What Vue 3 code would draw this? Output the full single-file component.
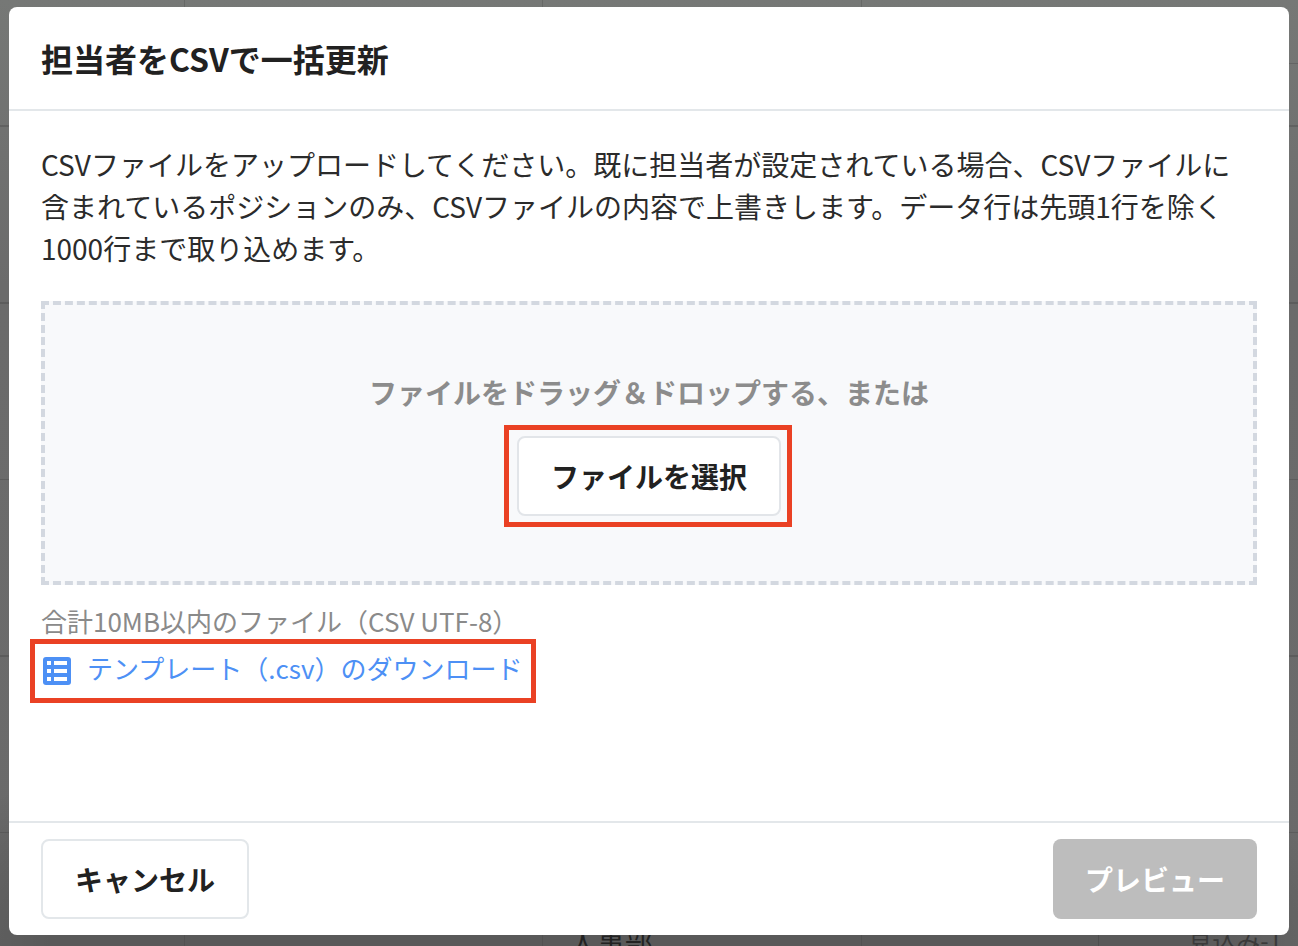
<script setup>
const columns = [
  { id: 'c1', rows: [] },
  { id: 'c2', rows: [] },
  { id: 'c3', rows: [{ text: '人事部', cls: 'dept' }] },
  { id: 'c4', rows: [{ text: '見込み-1', cls: 'status' }] },
]
</script>

<template>
  <div class="page">
    <div class="backdrop">
      <div v-for="col in columns" :key="col.id" class="col">
        <span v-for="r in col.rows" :key="r.text" :class="['cell', r.cls]">{{ r.text }}</span>
      </div>
    </div>
    <div class="tick"></div>
    <div class="tick-bottom"></div>
    <section class="modal">
      <header class="head"><h2>担当者をCSVで一括更新</h2></header>
      <div class="body">
        <p class="desc">CSVファイルをアップロードしてください。既に担当者が設定されている場合、CSVファイルに<br>含まれているポジションのみ、CSVファイルの内容で上書きします。データ行は先頭1行を除く<br>1000行まで取り込めます。</p>
        <div class="drop">
          <div class="drop-label">ファイルをドラッグ＆ドロップする、または</div>
          <div class="mark mark-btn"><button class="pick">ファイルを選択</button></div>
        </div>
        <div class="note">合計10MB以内のファイル（CSV UTF-8）</div>
        <div class="mark mark-link">
          <a class="tpl">
            <svg class="ico" viewBox="0 0 28 28" width="28" height="28">
              <rect width="28" height="28" rx="3" fill="#4d90f5" />
              <rect x="4" y="4" width="4" height="4" fill="#fff" />
              <rect x="11" y="4" width="13" height="4" fill="#fff" />
              <rect x="4" y="12" width="4" height="4" fill="#fff" />
              <rect x="11" y="12" width="13" height="4" fill="#fff" />
              <rect x="4" y="20" width="4" height="4" fill="#fff" />
              <rect x="11" y="20" width="13" height="4" fill="#fff" />
            </svg>
            <span class="tpl-text">テンプレート（.csv）のダウンロード</span>
          </a>
        </div>
      </div>
      <footer class="foot">
        <button class="btn cancel">キャンセル</button>
        <button class="btn preview" disabled>プレビュー</button>
      </footer>
    </section>
  </div>
</template>

<style>
html, body { margin: 0; background: #6c6c6c; }
</style>

<style scoped>
.page {
  position: relative;
  width: 1298px;
  height: 946px;
  overflow: hidden;
  font-family: "Noto Sans CJK JP", "Noto Sans", sans-serif;
  background:
    radial-gradient(ellipse 760px 260px at 620px 946px, rgba(0, 0, 0, 0.16) 75%, rgba(0, 0, 0, 0) 100%),
    linear-gradient(180deg, #767876 0%, #6b6b6b 30%, #6a6a6a 100%);
}
.backdrop {
  position: absolute;
  inset: 0;
  display: grid;
  grid-template-columns: 185px 358px 319px 436px;
  background: repeating-linear-gradient(180deg, transparent 0, transparent 174.5px, rgba(50, 50, 50, 0.25) 174.5px, rgba(50, 50, 50, 0.25) 176.5px) 0 -49px;
}
.col {
  position: relative;
  border-right: 1px solid rgba(60, 60, 60, 0.25);
}
.col:last-child { border-right: 0; }
.tick {
  position: absolute;
  left: 1289px;
  top: 63px;
  width: 9px;
  height: 1px;
  background: rgba(50, 50, 50, 0.25);
}
.tick-bottom {
  position: absolute;
  left: 1098px;
  top: 935px;
  width: 1px;
  height: 11px;
  background: rgba(50, 50, 50, 0.3);
}
.cell {
  position: absolute;
  top: 927px;
  font-size: 28px;
  line-height: 30px;
  color: #222;
  white-space: nowrap;
}
.dept { left: 26px; }
.status { top: 925px; right: 16px; font-size: 24px; color: #3a3a3a; }
.modal {
  position: absolute;
  left: 9px;
  top: 7px;
  width: 1280px;
  height: 928px;
  background: #fff;
  border-radius: 8px;
  display: flex;
  flex-direction: column;
  color: #212121;
}
.head {
  height: 104px;
  box-sizing: border-box;
  border-bottom: 2px solid #e3e7ea;
  padding: 0 32px;
  display: flex;
  align-items: center;
  flex-shrink: 0;
}
.head h2 {
  margin: 0;
  font-size: 32px;
  font-weight: 700;
  line-height: 44px;
}
.body {
  flex: 1;
  padding: 32px 32px 0;
}
.desc {
  margin: 0;
  font-size: 28px;
  line-height: 42px;
  color: #2b2b2b;
  white-space: nowrap;
}
.drop {
  margin-top: 32px;
  height: 284px;
  box-sizing: border-box;
  border: 4px dashed #d3d8e0;
  background: #f8f9fb;
  display: flex;
  flex-direction: column;
  align-items: center;
  padding-top: 69px;
}
.drop-label {
  font-size: 28px;
  font-weight: 700;
  line-height: 36px;
  color: #8c8c8c;
}
.mark { border: 5px solid #ea4124; box-sizing: border-box; }
.mark-btn {
  margin-top: 15px;
  margin-right: 2px;
  width: 288px;
  height: 102px;
  display: flex;
  align-items: center;
  justify-content: center;
}
.pick {
  width: 264px;
  height: 80px;
  margin-left: 2px;
  background: #fff;
  border: 2px solid #e2e5e9;
  border-radius: 8px;
  font: 700 28px "Noto Sans CJK JP", sans-serif;
  color: #212121;
  padding: 0;
}
.note {
  margin-top: 17px;
  font-size: 26px;
  line-height: 38px;
  color: #8a8a8a;
  white-space: nowrap;
}
.mark-link {
  margin-top: -1px;
  margin-left: -11px;
  width: 506px;
  height: 64px;
  display: flex;
  align-items: center;
  padding-left: 8px;
}
.tpl {
  display: flex;
  align-items: center;
  gap: 16px;
  color: #4d90f5;
  font-size: 26px;
  white-space: nowrap;
}
.tpl-text { margin-bottom: 8px; }
.ico { display: block; flex-shrink: 0; }
.foot {
  height: 114px;
  box-sizing: border-box;
  border-top: 2px solid #e3e7ea;
  padding: 16px 32px;
  display: flex;
  justify-content: space-between;
  flex-shrink: 0;
}
.btn {
  height: 80px;
  border-radius: 8px;
  font: 700 28px "Noto Sans CJK JP", sans-serif;
  padding: 0;
}
.cancel {
  width: 208px;
  background: #fff;
  border: 2px solid #e3e7ea;
  color: #212121;
}
.preview {
  width: 204px;
  background: #bdbdbd;
  border: 0;
  color: #fff;
}
</style>
